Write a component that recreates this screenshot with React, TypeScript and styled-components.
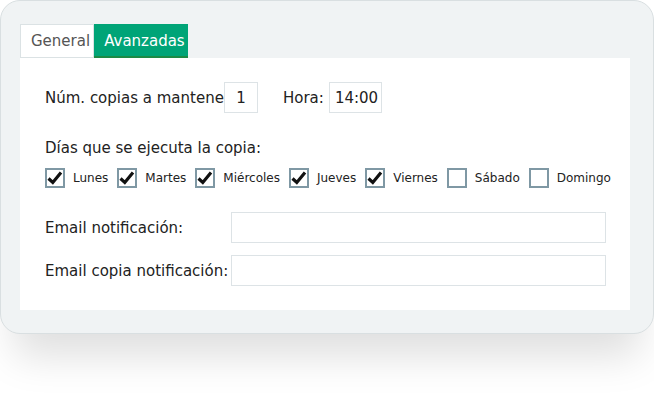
import { createGlobalStyle } from 'styled-components'
import styled from 'styled-components'

const GlobalStyle = createGlobalStyle`
  html, body {
    margin: 0;
    padding: 0;
    background: #ffffff;
  }
  body {
    font-family: "DejaVu Sans", "Liberation Sans", sans-serif;
    color: #222;
  }
`

const Page = styled.div`
  width: 654px;
  height: 399px;
  overflow: hidden;
  background: #ffffff;
`

const Card = styled.div`
  width: 654px;
  height: 334px;
  box-sizing: border-box;
  background: #f0f3f4;
  border: 1px solid #d9dfe1;
  border-radius: 20px;
  padding: 23px 23px 0 19px;
  box-shadow: 0 36px 40px -14px rgba(0, 0, 0, 0.13);
`

const TabStrip = styled.div`
  display: flex;
  align-items: stretch;
  height: 34px;
`

const Tab = styled.div<{ $active?: boolean }>`
  box-sizing: border-box;
  height: 34px;
  display: flex;
  align-items: center;
  font-size: 15px;
  padding: 0 3px 0 10px;
  white-space: nowrap;
  ${({ $active }) =>
    $active
      ? `
    background: #00a477;
    color: #ffffff;
    border-bottom: 2px solid #1c8a45;
    padding-top: 1px;
  `
      : `
    background: #ffffff;
    color: #555;
    border: 1px solid #dbe2e4;
  `}
`

const Panel = styled.div`
  background: #ffffff;
  width: 610px;
  height: 252px;
  box-sizing: border-box;
  padding: 24px 25px;
`

const Row = styled.div<{ $mt?: number }>`
  display: flex;
  align-items: center;
  height: 31px;
  margin-top: ${({ $mt }) => $mt ?? 0}px;
`

const Label = styled.div<{ $w?: number; $ml?: number }>`
  font-size: 15px;
  white-space: nowrap;
  overflow: hidden;
  flex-shrink: 0;
  width: ${({ $w }) => ($w ? `${$w}px` : 'auto')};
  margin-left: ${({ $ml }) => $ml ?? 0}px;
`

const Field = styled.div<{ $w: number; $ml?: number; $center?: boolean }>`
  box-sizing: border-box;
  width: ${({ $w }) => $w}px;
  height: 31px;
  margin-left: ${({ $ml }) => $ml ?? 0}px;
  border: 1px solid #dde3e6;
  background: #fff;
  font-size: 15px;
  display: flex;
  align-items: center;
  justify-content: ${({ $center }) => ($center ? 'center' : 'flex-start')};
  padding-left: ${({ $center }) => ($center ? 0 : 5)}px;
  flex-shrink: 0;
`

const Heading = styled.div`
  font-size: 15px;
  line-height: 18px;
  margin-top: 26px;
`

const DaysRow = styled.div`
  display: flex;
  align-items: center;
  margin-top: 11px;
  height: 20px;
`

const Day = styled.label`
  display: flex;
  align-items: center;
`

const Box = styled.div`
  box-sizing: border-box;
  width: 20px;
  height: 20px;
  border: 2px solid #7f98a4;
  background: #fff;
  display: flex;
  align-items: center;
  justify-content: center;
  flex-shrink: 0;
`

const DayText = styled.span`
  font-size: 12px;
  margin: 0 9px 0 8px;
  white-space: nowrap;
  color: #222;
`

const days = [
  { name: 'Lunes', on: true },
  { name: 'Martes', on: true },
  { name: 'Miércoles', on: true },
  { name: 'Jueves', on: true },
  { name: 'Viernes', on: true },
  { name: 'Sábado', on: false },
  { name: 'Domingo', on: false },
]

function Check() {
  return (
    <svg width="16" height="16" viewBox="0 0 16 16">
      <path d="M1.5 8.5 L5.8 12.5 L14 2.5" fill="none" stroke="#111" strokeWidth="3.2" strokeLinejoin="miter" />
    </svg>
  )
}

export default function App() {
  return (
    <>
      <GlobalStyle />
      <Page>
        <Card>
          <TabStrip>
            <Tab>General</Tab>
            <Tab $active>Avanzadas</Tab>
          </TabStrip>
          <Panel>
            <Row>
              <Label $w={179}>Núm. copias a mantener:</Label>
              <Field $w={34} $center>1</Field>
              <Label $ml={25}>Hora:</Label>
              <Field $w={53} $ml={5}>14:00</Field>
            </Row>
            <Heading>Días que se ejecuta la copia:</Heading>
            <DaysRow>
              {days.map((d) => (
                <Day key={d.name}>
                  <Box>{d.on && <Check />}</Box>
                  <DayText>{d.name}</DayText>
                </Day>
              ))}
            </DaysRow>
            <Row $mt={24}>
              <Label $w={186}>Email notificación:</Label>
              <Field $w={375} />
            </Row>
            <Row $mt={12}>
              <Label $w={186}>Email copia notificación:</Label>
              <Field $w={375} />
            </Row>
          </Panel>
        </Card>
      </Page>
    </>
  )
}
